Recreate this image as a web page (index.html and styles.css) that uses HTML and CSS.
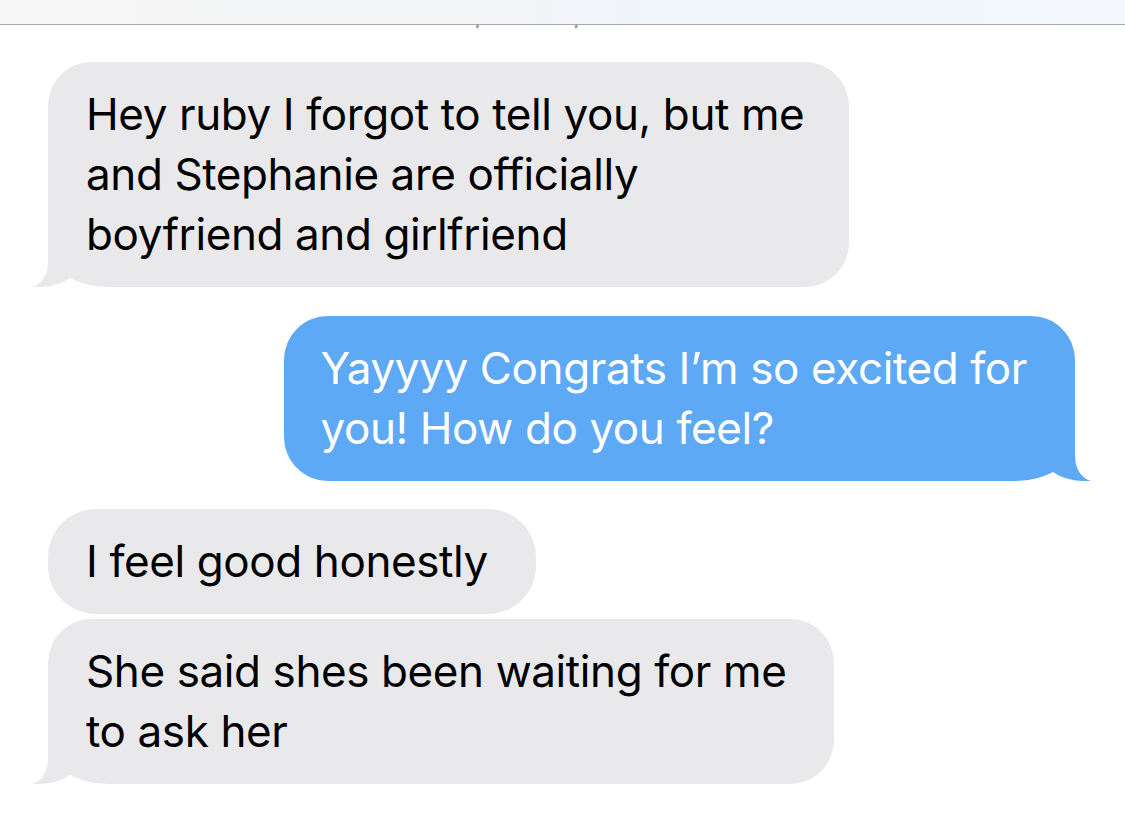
FILE: index.html
```html
<!DOCTYPE html>
<html lang="en">
<head>
<meta charset="utf-8">
<title>Messages</title>
<link rel="stylesheet" href="styles.css">
</head>
<body>
<div class="screen">
  <div class="topbar"></div>
  <div class="stamp">Wed, Feb 28, 9:41 PM</div>
  <div class="thread">
    <div class="bubble them tailed b1">
      Hey ruby I forgot to tell you, but me<br>and Stephanie are officially<br>boyfriend and girlfriend
      <svg class="tail tail-left" viewBox="0 0 40 50" width="40" height="50" aria-hidden="true"><path d="M16 0 L16 24 C16 40 8 48 0 50 Q24 51 38 41 L38 0 Z"/></svg>
    </div>
    <div class="bubble me tailed b2">
      Yayyyy Congrats I’m so excited for<br>you! How do you feel?
      <svg class="tail tail-right" viewBox="0 0 40 50" width="40" height="50" aria-hidden="true"><path d="M16 0 L16 24 C16 40 8 48 0 50 Q24 51 38 41 L38 0 Z"/></svg>
    </div>
    <div class="bubble them b3">I feel good honestly</div>
    <div class="bubble them tailed b4">
      She said shes been waiting for me<br>to ask her
      <svg class="tail tail-left" viewBox="0 0 40 50" width="40" height="50" aria-hidden="true"><path d="M16 0 L16 24 C16 40 8 48 0 50 Q24 51 38 41 L38 0 Z"/></svg>
    </div>
  </div>
</div>
</body>
</html>
```
FILE: styles.css
```css
html, body {
  margin: 0;
  padding: 0;
  background: #ffffff;
}

.screen {
  position: relative;
  width: 1125px;
  height: 823px;
  overflow: hidden;
  font-family: Inter, "Noto Sans", "Liberation Sans", sans-serif;
}

.topbar {
  position: absolute;
  top: 0;
  left: 0;
  right: 0;
  height: 24px;
  background: linear-gradient(to right, #f6f6f6 0%, #f4f5f7 40%, #f1f6fb 60%, #f3f7fb 100%);
  border-bottom: 1px solid #a9a9a9;
  z-index: 2;
}

.stamp {
  height: 30px;
  margin-top: 0;
  text-align: center;
  padding-right: 20px;
  font-size: 26px;
  line-height: 30px;
  color: #8a8a8e;
}

.thread {
  display: flex;
  flex-direction: column;
  align-items: flex-start;
  padding: 32px 50px 0 48px;
}

.bubble {
  position: relative;
  box-sizing: border-box;
  padding: 22px 48px 23px 38px;
  border-radius: 44px;
  font-size: 44px;
  line-height: 60px;
  letter-spacing: -0.4px;
  white-space: nowrap;
}

.them {
  background: #e9e9eb;
  color: #000000;
}

.them.tailed {
  border-bottom-left-radius: 60px 40px;
}

.me {
  align-self: flex-end;
  background: #5ea9f5;
  color: #ffffff;
}

.me.tailed {
  border-bottom-right-radius: 60px 40px;
}

.tail {
  position: absolute;
  bottom: 0;
  display: block;
}

.tail-left {
  left: -16px;
}

.tail-right {
  right: -16px;
  transform: scaleX(-1);
}

.them .tail path {
  fill: #e9e9eb;
}

.me .tail path {
  fill: #5ea9f5;
}

.b1 {
  padding-right: 45px;
}

.b2 {
  margin-top: 29px;
  padding-left: 37px;
}

.b3 {
  margin-top: 28px;
  border-radius: 48px;
}

.b4 {
  margin-top: 5px;
}
```
